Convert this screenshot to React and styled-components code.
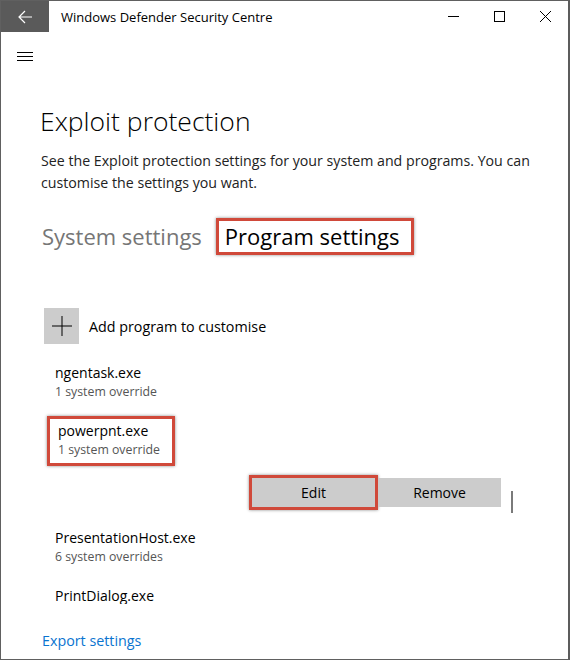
import React from 'react'
import styled, { createGlobalStyle } from 'styled-components'

const GlobalStyle = createGlobalStyle`
  html, body { margin: 0; padding: 0; background: #fff; }
  body { font-family: "Open Sans", "Noto Sans", "Liberation Sans", sans-serif; }
`

const programs = [
  { name: 'ngentask.exe', note: '1 system override' },
  { name: 'powerpnt.exe', note: '1 system override', marked: true },
  { name: 'PresentationHost.exe', note: '6 system overrides' },
  { name: 'PrintDialog.exe', note: '' },
]

function App() {
  return (
    <>
      <GlobalStyle />
      <Window>
        <TitleBar>
          <BackButton>
            <svg width="16" height="14" viewBox="0 0 16 14">
              <path d="M8 1 L2 7 L8 13 M2 7 H15" stroke="#fff" strokeWidth="1.2" fill="none" />
            </svg>
          </BackButton>
          <WindowTitle>Windows Defender Security Centre</WindowTitle>
          <Controls>
            <ControlButton>
              <svg width="11" height="11" viewBox="0 0 11 11">
                <path d="M0 5.5 H11" stroke="#000" strokeWidth="1" />
              </svg>
            </ControlButton>
            <ControlButton>
              <svg width="11" height="11" viewBox="0 0 11 11">
                <rect x="0.5" y="0.5" width="10" height="10" stroke="#000" strokeWidth="1" fill="none" />
              </svg>
            </ControlButton>
            <ControlButton>
              <svg width="11" height="11" viewBox="0 0 11 11">
                <path d="M0 0 L11 11 M11 0 L0 11" stroke="#000" strokeWidth="1" />
              </svg>
            </ControlButton>
          </Controls>
        </TitleBar>

        <Hamburger>
          <span /><span /><span />
        </Hamburger>

        <Content>
          <PageTitle>Exploit protection</PageTitle>
          <Description>
            See the Exploit protection settings for your system and programs. You can
            customise the settings you want.
          </Description>

          <Tabs>
            <Tab>System settings</Tab>
            <TabMark>
              <Tab active>Program settings</Tab>
            </TabMark>
          </Tabs>

          <AddRow>
            <PlusBox>
              <svg width="20" height="20" viewBox="0 0 20 20">
                <path d="M10 0 V20 M0 10 H20" stroke="#000" strokeWidth="1" />
              </svg>
            </PlusBox>
            <AddLabel>Add program to customise</AddLabel>
          </AddRow>

          <ProgramList>
            {programs.map((p) =>
              p.marked ? (
                <React.Fragment key={p.name}>
                  <ItemMark>
                    <ProgramName>{p.name}</ProgramName>
                    <ProgramNote>{p.note}</ProgramNote>
                  </ItemMark>
                  <ActionRow>
                    <ButtonMark>
                      <ActionButton>Edit</ActionButton>
                    </ButtonMark>
                    <ActionButton>Remove</ActionButton>
                    <ScrollThumb />
                  </ActionRow>
                </React.Fragment>
              ) : (
                <ProgramItem key={p.name}>
                  <ProgramName>{p.name}</ProgramName>
                  {p.note && <ProgramNote>{p.note}</ProgramNote>}
                </ProgramItem>
              )
            )}
          </ProgramList>

          <ExportLink href="#">Export settings</ExportLink>
        </Content>
      </Window>
    </>
  )
}

export default App

const Window = styled.div`
  width: 570px;
  height: 660px;
  box-sizing: border-box;
  border: 1px solid #606060;
  border-right: 2px solid #5c5c5c;
  background: #fff;
  overflow: hidden;
  display: flex;
  flex-direction: column;
`

const TitleBar = styled.div`
  height: 31px;
  display: flex;
  align-items: center;
  flex-shrink: 0;
`

const BackButton = styled.div`
  width: 48px;
  height: 31px;
  background: #5a5a5a;
  display: flex;
  align-items: center;
  justify-content: center;
`

const WindowTitle = styled.div`
  margin-left: 12px;
  font-size: 13px;
  color: #000;
  flex: 1;
`

const Controls = styled.div`
  display: flex;
  height: 31px;
`

const ControlButton = styled.div`
  width: 46px;
  height: 31px;
  display: flex;
  align-items: center;
  justify-content: center;
`

const Hamburger = styled.div`
  margin: 20px 0 0 16px;
  width: 16px;
  display: flex;
  flex-direction: column;
  gap: 3px;

  span {
    display: block;
    height: 1px;
    background: #000;
  }
`

const Content = styled.div`
  padding-left: 38px;
  display: flex;
  flex-direction: column;
  flex: 1;
`

const PageTitle = styled.h1`
  margin: 42px 0 0 1px;
  font-size: 26.5px;
  font-weight: 300;
  line-height: 36px;
  color: #000;
`

const Description = styled.p`
  margin: 11px 0 0 2px;
  width: 510px;
  font-size: 14.2px;
  line-height: 22px;
  color: #222;
`

const Tabs = styled.div`
  margin-top: 24px;
  display: flex;
  align-items: center;
  gap: 14px;
  padding-left: 3px;
`

const Tab = styled.div`
  font-size: 22px;
  line-height: 31px;
  color: ${(p) => (p.active ? '#000' : '#767676')};
`

const TabMark = styled.div`
  border: 3px solid #d0493a;
  box-shadow: 0 0 3px rgba(0, 0, 0, 0.45);
  padding: 0 11px 0 6px;
`

const AddRow = styled.div`
  margin: 53px 0 0 5px;
  display: flex;
  align-items: center;
  gap: 10px;
`

const PlusBox = styled.div`
  width: 35px;
  height: 36px;
  background: #cccccc;
  display: flex;
  align-items: center;
  justify-content: center;
`

const AddLabel = styled.div`
  font-size: 14.3px;
  color: #000;
`

const ProgramList = styled.div`
  margin-top: 11px;
  height: 249px;
  overflow: hidden;
  display: flex;
  flex-direction: column;
`

const ProgramItem = styled.div`
  padding: 8px 0 12px 16px;
`

const ItemMark = styled.div`
  align-self: flex-start;
  margin: 3px 0 0 8px;
  border: 3px solid #d0493a;
  box-shadow: 0 0 3px rgba(0, 0, 0, 0.45);
  padding: 2px 12px 4px 8px;
`

const ProgramName = styled.div`
  font-size: 14px;
  line-height: 20px;
  color: #000;
`

const ProgramNote = styled.div`
  font-size: 12.3px;
  line-height: 18px;
  color: #555;
`

const ActionRow = styled.div`
  display: flex;
  align-items: center;
  margin: 5px 0 7px 210px;
`

const ButtonMark = styled.div`
  border: 3px solid #d0493a;
  box-shadow: 0 0 3px rgba(0, 0, 0, 0.45);
`

const ActionButton = styled.div`
  width: 123px;
  height: 29px;
  background: #cccccc;
  display: flex;
  align-items: center;
  justify-content: center;
  font-size: 14px;
  color: #000;
`

const ScrollThumb = styled.div`
  align-self: flex-start;
  margin: 20px 0 0 10px;
  width: 2px;
  height: 22px;
  background: #7a7a7a;
`

const ExportLink = styled.a`
  margin: 27px 0 0 3px;
  font-size: 14.3px;
  line-height: 20px;
  color: #0a74d0;
  text-decoration: none;
`
